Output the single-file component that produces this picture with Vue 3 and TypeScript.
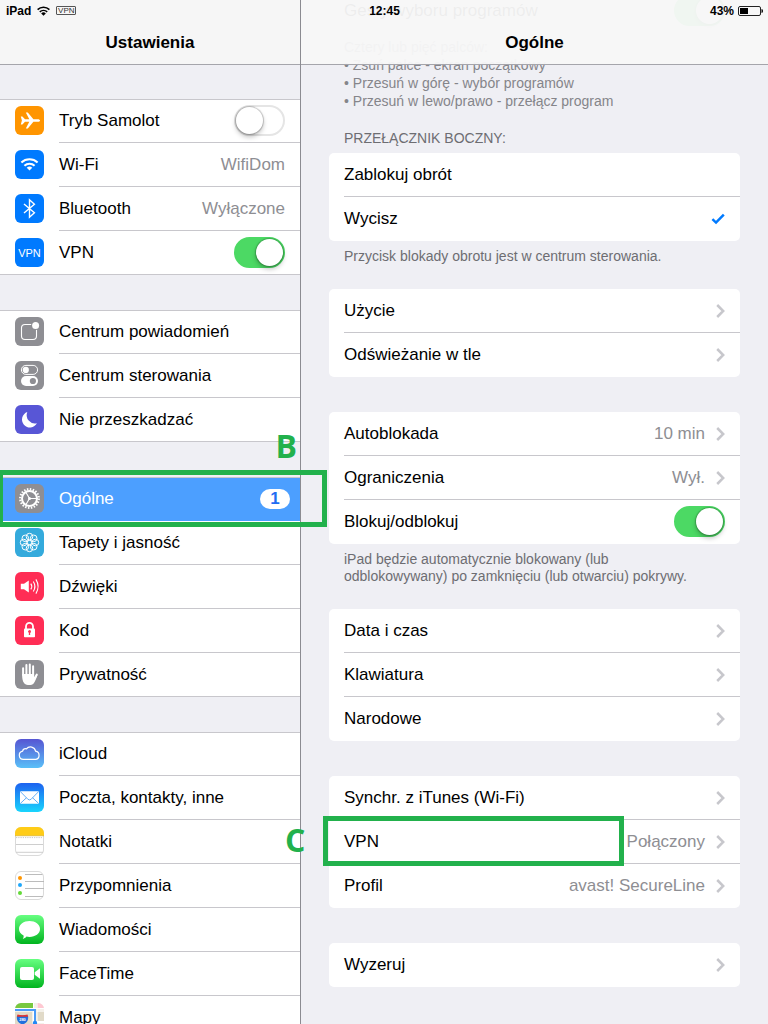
<script setup lang="ts">
import { ref } from 'vue'

interface Item {
  id: string
  label: string
  icon?: string
  value?: string
  badge?: string
  kind?: 'link' | 'toggle' | 'radio'
  selected?: boolean
  mark?: string
}

interface Section {
  title?: string
  items: Item[]
  notes?: string[]
  list?: boolean
}

const toggles = ref<Record<string, boolean>>({
  airplane: false,
  vpn: true,
  gestures: true,
  lock: true,
})
const sideSwitch = ref('mute')

const sidebar: Item[][] = [
  [
    { id: 'airplane', label: 'Tryb Samolot', icon: 'airplane', kind: 'toggle' },
    { id: 'wifi', label: 'Wi-Fi', icon: 'wifi', value: 'WifiDom' },
    { id: 'bluetooth', label: 'Bluetooth', icon: 'bluetooth', value: 'Wyłączone' },
    { id: 'vpn', label: 'VPN', icon: 'vpn', kind: 'toggle' },
  ],
  [
    { id: 'notifications', label: 'Centrum powiadomień', icon: 'notifications' },
    { id: 'control', label: 'Centrum sterowania', icon: 'control' },
    { id: 'dnd', label: 'Nie przeszkadzać', icon: 'moon' },
  ],
  [
    { id: 'general', label: 'Ogólne', icon: 'gear', badge: '1', selected: true, mark: 'B' },
    { id: 'wallpaper', label: 'Tapety i jasność', icon: 'flower' },
    { id: 'sounds', label: 'Dźwięki', icon: 'sound' },
    { id: 'passcode', label: 'Kod', icon: 'lock' },
    { id: 'privacy', label: 'Prywatność', icon: 'hand' },
  ],
  [
    { id: 'icloud', label: 'iCloud', icon: 'icloud' },
    { id: 'mail', label: 'Poczta, kontakty, inne', icon: 'mail' },
    { id: 'notes', label: 'Notatki', icon: 'notes' },
    { id: 'reminders', label: 'Przypomnienia', icon: 'reminders' },
    { id: 'messages', label: 'Wiadomości', icon: 'messages' },
    { id: 'facetime', label: 'FaceTime', icon: 'facetime' },
    { id: 'maps', label: 'Mapy', icon: 'maps' },
  ],
]

const sections: Section[] = [
  {
    items: [{ id: 'gestures', label: 'Gesty wyboru programów', kind: 'toggle' }],
    list: true,
    notes: [
      'Cztery lub pięć palców:',
      '• Zsuń palce - ekran początkowy',
      '• Przesuń w górę - wybór programów',
      '• Przesuń w lewo/prawo - przełącz program',
    ],
  },
  {
    title: 'PRZEŁĄCZNIK BOCZNY:',
    items: [
      { id: 'rotation', label: 'Zablokuj obrót', kind: 'radio' },
      { id: 'mute', label: 'Wycisz', kind: 'radio' },
    ],
    notes: ['Przycisk blokady obrotu jest w centrum sterowania.'],
  },
  {
    items: [
      { id: 'usage', label: 'Użycie' },
      { id: 'refresh', label: 'Odświeżanie w tle' },
    ],
  },
  {
    items: [
      { id: 'autolock', label: 'Autoblokada', value: '10 min' },
      { id: 'restrictions', label: 'Ograniczenia', value: 'Wył.' },
      { id: 'lock', label: 'Blokuj/odblokuj', kind: 'toggle' },
    ],
    notes: [
      'iPad będzie automatycznie blokowany (lub',
      'odblokowywany) po zamknięciu (lub otwarciu) pokrywy.',
    ],
  },
  {
    items: [
      { id: 'date', label: 'Data i czas' },
      { id: 'keyboard', label: 'Klawiatura' },
      { id: 'locale', label: 'Narodowe' },
    ],
  },
  {
    items: [
      { id: 'itunes', label: 'Synchr. z iTunes (Wi-Fi)' },
      { id: 'vpn-detail', label: 'VPN', value: 'Połączony', mark: 'C' },
      { id: 'profile', label: 'Profil', value: 'avast! SecureLine' },
    ],
  },
  { items: [{ id: 'reset', label: 'Wyzeruj' }] },
]

const tile = (fill: string) => `<rect width="29" height="29" rx="6" fill="${fill}"/>`
const gradient = (id: string, from: string, to: string) =>
  `<defs><linearGradient id="${id}" x1="0" y1="0" x2="0" y2="1"><stop offset="0" stop-color="${from}"/><stop offset="1" stop-color="${to}"/></linearGradient></defs>` +
  tile(`url(#${id})`)

const petals = Array.from({ length: 8 }, (_, i) => {
  const angle = (i * Math.PI) / 4
  const cx = (14.5 + 5.9 * Math.cos(angle)).toFixed(2)
  const cy = (14.5 + 5.9 * Math.sin(angle)).toFixed(2)
  return `<circle cx="${cx}" cy="${cy}" r="3.3"/>`
}).join('')

const icons: Record<string, string> = {
  airplane:
    tile('#ff9500') +
    '<path fill="#fff" d="M5.8 10.4H7.4L10 13.2H14.3L10.8 6.4H12.8L18.4 13.2H22.6C24.2 13.2 25 13.8 25 14.5S24.2 15.8 22.6 15.8H18.4L12.8 22.6H10.8L14.3 15.8H10L7.4 18.6H5.8L6.9 14.5Z"/>',
  wifi:
    tile('#007aff') +
    '<g fill="none" stroke="#fff" stroke-width="2.1"><path d="M6.4 12.4A12 12 0 0 1 22.6 12.4"/><path d="M9.4 15.7A7.5 7.5 0 0 1 19.6 15.7"/></g><path fill="#fff" d="M11.7 17.7A4.2 4.2 0 0 1 17.3 17.7L14.5 20.5Z"/>',
  bluetooth:
    tile('#007aff') +
    '<path fill="none" stroke="#fff" stroke-width="1.4" d="M9 10L19.4 18.8L14.5 23.2V5.8L19.4 10.2L9 19"/>',
  vpn:
    tile('#007aff') +
    '<text x="14.5" y="18.6" text-anchor="middle" font-size="11" fill="#fff">VPN</text>',
  notifications:
    tile('#8e8e93') +
    '<rect x="6.5" y="7.5" width="15" height="15" rx="3.5" fill="none" stroke="#fff" stroke-width="1.1"/><circle cx="20.6" cy="8.4" r="4.6" fill="#8e8e93"/><circle cx="20.6" cy="8.4" r="3.5" fill="#fff"/>',
  control:
    tile('#8e8e93') +
    '<rect x="6.4" y="4.4" width="16.2" height="9" rx="4.5" fill="none" stroke="#fff"/><circle cx="10.8" cy="8.9" r="3.1" fill="#fff"/><rect x="6" y="15" width="17" height="10" rx="5" fill="#fff"/><circle cx="17.9" cy="20" r="3.1" fill="#8e8e93"/>',
  moon:
    tile('#5856d6') +
    '<path fill="#fff" d="M12.3 7.1A7.9 7.9 0 1 0 21.9 18.2A8.2 8.2 0 0 1 12.3 7.1Z"/>',
  gear:
    tile('#8e8e93') +
    '<g fill="none" stroke="#fff"><circle cx="14.5" cy="14.5" r="9.3" stroke-width="2.3" stroke-dasharray="1.5 1.422"/><circle cx="14.5" cy="14.5" r="7.5" stroke-width="2"/><path stroke-width="1.1" d="M14.5 14.5H21.5M14.5 14.5L11 8.4M14.5 14.5L11 20.6"/></g><circle cx="14.5" cy="14.5" r="1.5" fill="#fff"/>',
  flower:
    tile('#34aadc') +
    `<g fill="none" stroke="#fff" stroke-width="1">${petals}<circle cx="14.5" cy="14.5" r="2.2"/></g>`,
  sound:
    tile('#ff2d55') +
    '<path fill="#fff" d="M5.8 11.7H9L13.8 8.5V20.5L9 17.3H5.8Z"/><g fill="none" stroke="#fff" stroke-width="1.1"><path d="M15.8 11.6Q17.8 14.5 15.8 17.4"/><path d="M18.3 9.5Q21.5 14.5 18.3 19.5"/><path d="M20.9 7.4Q25.3 14.5 20.9 21.6"/></g>',
  lock:
    tile('#ff2d55') +
    '<path fill="none" stroke="#fff" stroke-width="1.8" d="M11 13V10.4A3.5 3.5 0 0 1 18 10.4V13"/><rect x="9" y="12.4" width="11" height="8.9" rx=".8" fill="#fff"/><path fill="#ff2d55" d="M13 15.7A1.5 1.5 0 1 1 15.1 17L15.2 19H13.8L13.9 17Z"/>',
  hand:
    tile('#8e8e93') +
    '<g stroke="#fff" stroke-width="2" stroke-linecap="round" fill="none"><path d="M8.1 8.2V15M11.4 5V15M14.8 4.4V15M18.1 6.2V16"/><path d="M21.8 14.6L18.6 20"/></g><path fill="#fff" d="M7.1 14H19.1V17.5L22.6 14.8C21.3 18.5 20.2 21.6 18.4 23.7C17 25.4 11.8 25.7 9.4 23.5C7.5 21.6 7.1 18 7.1 14Z"/>',
  icloud:
    gradient('icloud-bg', '#5655d3', '#5ac0f8') +
    '<path fill="none" stroke="#fff" stroke-width="1.2" d="M8.4 20.4A4.2 4.2 0 0 1 7.6 12.1A3.2 3.2 0 0 1 11.4 9.8A5.3 5.3 0 0 1 20.6 12.2A4.2 4.2 0 0 1 20.9 20.4Z"/>',
  mail:
    gradient('mail-bg', '#1d62f0', '#19d5fd') +
    '<rect x="5" y="8.2" width="19" height="12.6" rx=".7" fill="#fff"/><path fill="none" stroke="#3d9af4" stroke-width=".8" d="M5.3 8.5L12.8 16.2Q14.5 17.7 16.2 16.2L23.7 8.5M5.3 20.5L11.4 14.8M23.7 20.5L17.6 14.8"/>',
  notes:
    '<rect x=".5" y=".5" width="28" height="28" rx="5.5" fill="#fff" stroke="#dadada"/><path fill="#ffcc17" d="M0 8.7V6A6 6 0 0 1 6 0H23A6 6 0 0 1 29 6V8.7Z"/><path stroke="#c9a21c" stroke-width=".5" d="M0 8.8H29"/><path stroke="#aaa" stroke-width=".8" stroke-dasharray=".8 1" d="M1 10.6H28"/><path stroke="#c8c8c8" stroke-width=".9" d="M1 17.5H28M1 25.3H28"/>',
  reminders:
    '<rect x=".5" y=".5" width="28" height="28" rx="5.5" fill="#fff" stroke="#dadada"/><path stroke="#b4b4b4" stroke-width=".9" d="M10 3.5H27.5M10 10.5H29M10 17.5H29M10 25.5H28"/><circle cx="5" cy="7" r="2" fill="#ff9500"/><circle cx="5" cy="14" r="2" fill="#1ea7fb"/><circle cx="5" cy="22" r="2" fill="#63da38"/>',
  messages:
    gradient('messages-bg', '#67ff81', '#01b41f') +
    '<path fill="#fff" d="M14.5 6C20.3 6 25 9.4 25 14S20.3 21.9 14.5 21.9C13.5 21.9 12.4 21.8 11.5 21.6C10.4 22.9 9.2 23.7 7.8 23.9C8.5 22.9 8.8 21.7 8.6 20.5C5.8 19.1 4 16.7 4 14C4 9.4 8.7 6 14.5 6Z"/>',
  facetime:
    gradient('facetime-bg', '#67ff81', '#01b41f') +
    '<rect x="5" y="8" width="14" height="13" rx="2" fill="#fff"/><path fill="#fff" d="M19.7 13.3L25 9.3V19.7L19.7 15.7Z"/>',
  maps:
    '<defs><clipPath id="maps-clip"><rect width="29" height="29" rx="6"/></clipPath></defs><g clip-path="url(#maps-clip)"><rect width="29" height="29" fill="#f4f1ea"/><path fill="#78c840" d="M0 0H18V5H0Z"/><path fill="#ffc8d2" d="M22 0H29V5H22Z"/><path fill="#e1dac8" d="M0 9H17V29H0ZM22 9H29V18H22Z"/><path fill="#fff" d="M0 5H29V6H0ZM18 0H19V29H18ZM22 0H22.5V29H22ZM22 18H29V20H22Z"/><path fill="none" stroke="#4a9bf8" stroke-width="2" d="M0 7H20V29"/><circle cx="20" cy="20" r="2.2" fill="#2489f4"/><path fill="#1f6fde" d="M2 12.5H13C13.6 17 12.6 20 7.5 21.5C2.4 20 1.4 17 2 12.5Z"/><path fill="#e5322d" d="M2.5 11.5Q7.5 12.8 12.5 11.5L13 13.8H2Z"/><text x="7.5" y="18.3" text-anchor="middle" font-size="4" font-weight="bold" fill="#fff">280</text></g>',
}
</script>

<template>
  <div class="app">
    <div class="status">
      <span class="status-side">
        <span>iPad</span>
        <svg class="status-wifi" viewBox="0 0 13 10" aria-hidden="true">
          <path d="M.6 3.6A8.6 8.6 0 0 1 12.4 3.6M2.8 5.9A5.4 5.4 0 0 1 10.2 5.9" fill="none" stroke="#000" stroke-width="1.6" />
          <path d="M4.2 7.4A3.3 3.3 0 0 1 8.8 7.4L6.5 9.8Z" />
        </svg>
        <span class="status-vpn">VPN</span>
      </span>
      <span>12:45</span>
      <span class="status-side status-end">
        <span>43%</span>
        <svg class="battery" viewBox="0 0 25 10" aria-hidden="true">
          <rect x=".5" y=".5" width="22" height="9" rx="1.5" fill="none" stroke="#222" />
          <rect x="2" y="2" width="8" height="6" />
          <path d="M23.5 3Q25 3.2 25 5T23.5 7Z" />
        </svg>
      </span>
    </div>

    <nav class="sidebar" aria-label="Ustawienia">
      <header class="bar bar-side"><h1>Ustawienia</h1></header>
      <div class="side-body">
        <ul v-for="(group, g) in sidebar" :key="g" class="group">
          <li v-for="item in group" :key="item.id" class="cell" :class="{ selected: item.selected }">
            <component
              :is="item.kind === 'toggle' ? 'label' : 'a'"
              class="row"
              :href="item.kind === 'toggle' ? undefined : '#' + item.id"
            >
              <svg class="icon" viewBox="0 0 29 29" aria-hidden="true" v-html="icons[item.icon!]"></svg>
              <span class="content">
                <span class="label">{{ item.label }}</span>
                <span v-if="item.value" class="value">{{ item.value }}</span>
                <span v-if="item.badge" class="badge">{{ item.badge }}</span>
                <input
                  v-if="item.kind === 'toggle'"
                  v-model="toggles[item.id]"
                  class="switch"
                  type="checkbox"
                  role="switch"
                />
              </span>
            </component>
            <template v-if="item.mark">
              <span class="frame frame-side"></span>
              <strong class="letter letter-side">{{ item.mark }}</strong>
            </template>
          </li>
        </ul>
      </div>
    </nav>

    <main class="detail">
      <header class="bar bar-detail"><h2>Ogólne</h2></header>
      <div class="detail-body">
        <section v-for="(section, s) in sections" :key="s" class="section">
          <h3 v-if="section.title" class="section-title">{{ section.title }}</h3>
          <ul class="card">
            <li v-for="item in section.items" :key="item.id" class="cell">
              <component
                :is="item.kind ? 'label' : 'a'"
                class="row"
                :href="item.kind ? undefined : '#' + item.id"
              >
                <span class="content">
                  <span class="label">{{ item.label }}</span>
                  <span v-if="item.value" class="value">{{ item.value }}</span>
                  <input
                    v-if="item.kind === 'toggle'"
                    v-model="toggles[item.id]"
                    class="switch"
                    type="checkbox"
                    role="switch"
                  />
                  <template v-else-if="item.kind === 'radio'">
                    <input v-model="sideSwitch" class="radio" type="radio" name="side-switch" :value="item.id" />
                    <svg v-if="sideSwitch === item.id" class="check" viewBox="0 0 14 12" aria-hidden="true">
                      <path d="M1.4 6.2L5 9.6L12.8 1.6" fill="none" stroke="#007aff" stroke-width="2.5" />
                    </svg>
                  </template>
                  <svg v-else class="chevron" viewBox="0 0 9 14" aria-hidden="true">
                    <path d="M1.2 1L7.2 7L1.2 13" fill="none" stroke="#c7c7cc" stroke-width="2.5" />
                  </svg>
                </span>
              </component>
              <template v-if="item.mark">
                <span class="frame frame-detail"></span>
                <strong class="letter letter-detail">{{ item.mark }}</strong>
              </template>
            </li>
          </ul>
          <p v-if="section.notes" class="notes" :class="{ 'notes-list': section.list }">
            <span v-for="line in section.notes" :key="line">{{ line }}</span>
          </p>
        </section>
      </div>
    </main>
  </div>
</template>

<style>
body {
  margin: 0;
  background: #efeff4;
}
</style>

<style scoped>
.app {
  position: relative;
  display: flex;
  height: 100vh;
  overflow: hidden;
  background: #efeff4;
  color: #000;
  font-family: "Liberation Sans", Arial, sans-serif;
  font-size: 17px;
  line-height: 20px;
}
ul, h1, h2, h3, p {
  margin: 0;
  padding: 0;
  list-style: none;
}

.status {
  position: absolute;
  inset: 0 0 auto;
  z-index: 4;
  display: flex;
  align-items: center;
  height: 21px;
  padding: 0 5px 0 6px;
  font-size: 12px;
  font-weight: bold;
}
.status-side {
  display: flex;
  flex: 1;
  align-items: center;
  gap: 6px;
}
.status-end {
  justify-content: flex-end;
  gap: 4px;
}
.status-wifi {
  width: 13px;
  height: 10px;
}
.status-vpn {
  box-sizing: border-box;
  width: 20px;
  height: 9px;
  border: 1px solid #555;
  border-radius: 1px;
  color: #333;
  font-size: 8px;
  font-weight: normal;
  line-height: 8px;
  display: flex;
  justify-content: center;
}
.battery {
  width: 25px;
  height: 10px;
}

.bar {
  box-sizing: border-box;
  height: 65px;
  padding-top: 33px;
  border-bottom: 1px solid #a5a5ab;
  text-align: center;
}
.bar h1, .bar h2 {
  font-size: 17px;
  font-weight: bold;
  line-height: 20px;
}
.bar-side {
  background: #f6f6f6;
}
.bar-detail {
  position: absolute;
  inset: 0 0 auto;
  z-index: 3;
  background: rgba(247, 247, 247, 0.96);
}

.sidebar {
  flex: 0 0 300px;
  border-right: 1px solid #8b8b91;
}
.side-body {
  display: flex;
  flex-direction: column;
  gap: 35px;
  padding-top: 34px;
}
.cell {
  position: relative;
}
.row {
  display: flex;
  box-sizing: border-box;
  height: 44px;
  color: inherit;
  text-decoration: none;
}
.content {
  display: flex;
  flex: 1;
  align-items: center;
  min-width: 0;
  padding-right: 15px;
  border-bottom: 1px solid #c8c7cc;
}
.label {
  flex: 1;
  white-space: nowrap;
}
.value {
  color: #8e8e93;
  white-space: nowrap;
}

.group .row {
  gap: 15px;
  padding-left: 15px;
  background: #fff;
}
.group .cell:first-child .row {
  box-shadow: inset 0 1px #c8c7cc;
}
.group .cell:last-child .row {
  border-bottom: 1px solid #c8c7cc;
}
.group .cell:last-child .content {
  border-bottom: 0;
}
.icon {
  flex: none;
  width: 29px;
  height: 29px;
  margin-top: 7px;
}
.group .selected .row {
  background: #4c9fff;
  box-shadow: 0 -1px #4c9fff, 0 -2px #fff;
  color: #fff;
}
.group .selected .content {
  padding-right: 10px;
  border-color: transparent;
}
.badge {
  width: 30px;
  border-radius: 10px;
  background: #fff;
  color: #1f6df2;
  font-weight: bold;
  line-height: 20px;
  text-align: center;
}

.switch {
  position: relative;
  box-sizing: border-box;
  flex: none;
  width: 51px;
  height: 31px;
  margin: 0;
  border: 2px solid #e5e5e5;
  border-radius: 16px;
  background: #fff;
  appearance: none;
}
.switch::before {
  content: "";
  position: absolute;
  top: 0;
  left: 0;
  width: 27px;
  height: 27px;
  border-radius: 50%;
  background: #fff;
  box-shadow: 0 0 1px 1px rgba(0, 0, 0, 0.2), 0 3px 5px rgba(0, 0, 0, 0.25);
}
.switch:checked {
  border-color: #4cd964;
  background: #4cd964;
}
.switch:checked::before {
  right: 0;
  left: auto;
}

.detail {
  position: relative;
  flex: 1;
  min-width: 0;
}
.detail-body {
  display: flex;
  flex-direction: column;
  gap: 35px;
  margin-top: -11px;
  padding: 0 28px;
}
.card {
  border-radius: 5px;
  background: #fff;
}
.card .row {
  padding-left: 15px;
}
.card .cell:last-child .content {
  border-color: transparent;
}
.section-title {
  padding: 0 15px 6px;
  color: #6d6d72;
  font-size: 14px;
  font-weight: normal;
  line-height: 18px;
}
.notes {
  margin-bottom: -11px;
  padding: 7px 15px 0;
  color: #6d6d72;
  font-size: 14px;
  line-height: 17px;
}
.notes span {
  display: block;
}
.notes-list {
  margin-bottom: -16px;
  padding-top: 5px;
  color: #85858a;
  line-height: 18px;
}
.chevron {
  width: 9px;
  height: 14px;
  margin-left: 11px;
}
.check {
  width: 14px;
  height: 12px;
}
.radio {
  width: 0;
  height: 0;
  margin: 0;
  appearance: none;
}

.frame {
  position: absolute;
  z-index: 2;
  box-sizing: border-box;
  border: 5px solid #22b14c;
  pointer-events: none;
}
.frame-side {
  top: -7px;
  right: -27px;
  bottom: -6px;
  left: -2px;
}
.frame-detail {
  top: -4px;
  right: 116px;
  bottom: -2px;
  left: -6px;
}
.letter {
  position: absolute;
  z-index: 2;
  color: #22b14c;
  font-family: "Open Sans", "Noto Sans", sans-serif;
  font-size: 32px;
  font-weight: bold;
  line-height: 32px;
  pointer-events: none;
}
.letter-side {
  top: -47px;
  right: 3px;
}
.letter-detail {
  top: 4px;
  left: -44px;
}
</style>
